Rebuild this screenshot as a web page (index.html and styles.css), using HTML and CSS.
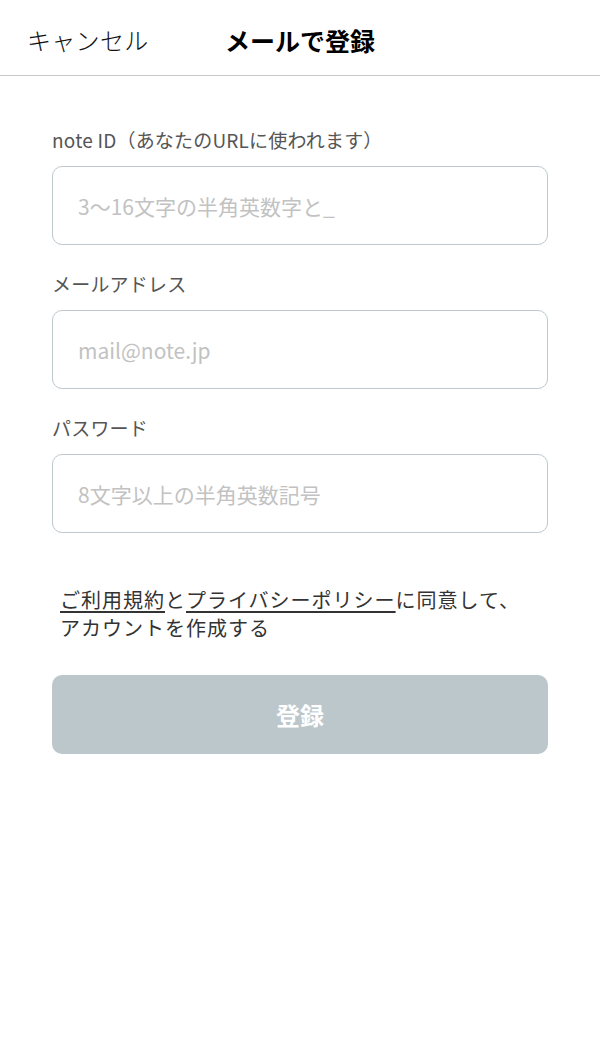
FILE: index.html
```html
<!DOCTYPE html>
<html lang="ja">
<head>
<meta charset="utf-8">
<title>メールで登録</title>
<link rel="stylesheet" href="styles.css">
</head>
<body>
<header class="nav">
  <span class="nav-cancel">キャンセル</span>
  <h1 class="nav-title">メールで登録</h1>
  <span class="nav-spacer"></span>
</header>
<main class="form">
  <label class="field">
    <span class="field-label">note ID（あなたのURLに使われます）</span>
    <input class="field-input" type="text" placeholder="3〜16文字の半角英数字と_">
  </label>
  <label class="field">
    <span class="field-label">メールアドレス</span>
    <input class="field-input" type="email" placeholder="mail@note.jp">
  </label>
  <label class="field">
    <span class="field-label">パスワード</span>
    <input class="field-input" type="password" placeholder="8文字以上の半角英数記号">
  </label>
  <p class="agree"><a class="agree-link">ご利用規約</a>と<a class="agree-link">プライバシーポリシー</a>に同意して、<br>アカウントを作成する</p>
  <button class="submit" type="button">登録</button>
</main>
</body>
</html>
```

FILE: styles.css
```css
* { box-sizing: border-box; }
html, body { margin: 0; padding: 0; background: #fff; }
body {
  font-family: "Noto Sans CJK JP", "Noto Sans", sans-serif;
  color: #222;
}
.nav {
  height: 76px;
  border-bottom: 1px solid #c8c8c8;
  display: grid;
  grid-template-columns: 1fr auto 1fr;
  align-items: center;
  padding-top: 4px;
}
.nav-cancel {
  font-size: 24px;
  font-weight: 300;
  color: #111;
  padding-left: 27px;
  line-height: 30px;
  letter-spacing: 0.3px;
}
.nav-title {
  margin: 0;
  font-size: 25px;
  font-weight: 700;
  color: #000;
  line-height: 30px;
}
.form {
  padding: 51px 52px 0;
  display: flex;
  flex-direction: column;
}
.field {
  display: flex;
  flex-direction: column;
  margin-bottom: 26px;
}
.field-label {
  font-size: 19px;
  line-height: 26px;
  color: #555;
  margin-bottom: 13px;
  letter-spacing: 0.2px;
}
.field-input {
  height: 79px;
  border: 1.5px solid #bec9ce;
  border-radius: 10px;
  padding: 0 0 0 25px;
  font-family: inherit;
  font-size: 21px;
  color: #222;
  background: #fff;
  outline: none;
}
.field-input::placeholder { color: #c2c2c2; }
.agree {
  margin: 27px 0 0;
  padding-left: 8px;
  font-size: 20px;
  line-height: 28px;
  color: #333;
  letter-spacing: 1px;
}
.agree-link {
  color: #333;
  text-decoration: underline;
  text-underline-offset: 3px;
  text-decoration-thickness: 1.5px;
}
.submit {
  margin-top: 33px;
  height: 79px;
  border: none;
  border-radius: 10px;
  background: #bcc7cc;
  color: #fff;
  font-family: inherit;
  font-size: 24px;
  font-weight: 700;
}
```
